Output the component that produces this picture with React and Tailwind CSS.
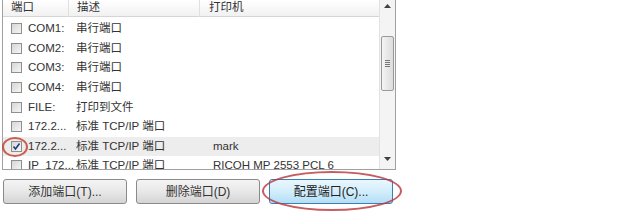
import React from "react";

const rows = [
	{ port: "COM1:", desc: "串行端口", printer: "" },
	{ port: "COM2:", desc: "串行端口", printer: "" },
	{ port: "COM3:", desc: "串行端口", printer: "" },
	{ port: "COM4:", desc: "串行端口", printer: "" },
	{ port: "FILE:", desc: "打印到文件", printer: "" },
	{ port: "172.2...", desc: "标准 TCP/IP 端口", printer: "" },
	{ port: "172.2...", desc: "标准 TCP/IP 端口", printer: "mark", checked: true },
	{ port: "IP_172...", desc: "标准 TCP/IP 端口", printer: "RICOH MP 2553 PCL 6" },
];

function CheckBox({ checked }) {
	return (
		<span className="w-[11px] h-[11px] shrink-0 border border-[#8f8f8f] bg-gradient-to-br from-[#d6d6d6] to-[#f6f6f6] flex items-center justify-center">
			{checked && (
				<svg width="9" height="9" viewBox="0 0 9 9">
					<path d="M1.5 4.5 L3.5 7 L7.5 1.5" fill="none" stroke="#1d3f78" strokeWidth="1.6" />
				</svg>
			)}
		</span>
	);
}

function ScrollBar() {
	return (
		<div className="w-[16px] h-full border-l border-[#e2e2e2] bg-[#f4f4f4] flex flex-col items-center">
			<div className="h-[12px] flex items-center justify-center">
				<svg width="7" height="4" viewBox="0 0 7 4">
					<path d="M0 4 L3.5 0 L7 4 Z" fill="#404040" />
				</svg>
			</div>
			<div className="h-[24px]" />
			<div className="w-[13px] h-[55px] rounded-[2px] border border-[#9a9a9a] bg-gradient-to-r from-[#f4f4f4] to-[#dcdcdc] flex flex-col items-center justify-center gap-[1px]">
				<span className="w-[5px] h-px bg-[#777]" />
				<span className="w-[5px] h-px bg-[#777]" />
				<span className="w-[5px] h-px bg-[#777]" />
				<span className="w-[5px] h-px bg-[#777]" />
			</div>
			<div className="flex-1" />
			<div className="h-[14px] flex items-start justify-center pt-[2px]">
				<svg width="7" height="4" viewBox="0 0 7 4">
					<path d="M0 0 L3.5 4 L7 0 Z" fill="#404040" />
				</svg>
			</div>
		</div>
	);
}

function Button({ children, hot }) {
	return (
		<button
			className={
				hot
					? "w-[124px] h-[25px] rounded-[3px] border border-[#3c7fb1] bg-gradient-to-b from-[#eaf6fd] via-[#d3eefc] to-[#b3def6] text-[#222] text-[12px]"
					: "w-[124px] h-[25px] rounded-[3px] border border-[#8a8a8a] bg-gradient-to-b from-[#f4f4f4] via-[#e8e8e8] to-[#d4d4d4] text-[#333] text-[12px]"
			}
		>
			{children}
		</button>
	);
}

export default function App() {
	return (
		<div
			className="relative w-[620px] h-[212px] overflow-hidden bg-white text-[#333]"
			style={{ fontFamily: '"Liberation Sans", "Noto Sans CJK SC", sans-serif' }}
		>
			<div className="ml-[2px] w-[394px] h-[170px] border-l border-r border-b border-[#a0a0a0] flex overflow-hidden">
				<div className="flex-1 flex flex-col overflow-hidden">
					<div className="h-[17px] shrink-0 flex items-center border-b border-[#d5d5d5] bg-gradient-to-b from-white to-[#f1f1f1] text-[11.5px]">
						<span className="w-[66px] pl-[8px] border-r border-[#e0e0e0]">端口</span>
						<span className="w-[131px] pl-[8px] border-r border-[#e0e0e0]">描述</span>
						<span className="flex-1 pl-[9px]">打印机</span>
					</div>
					<div className="pt-[2px] flex flex-col">
						{rows.map((r, i) => (
							<div
								key={i}
								className={
									"h-[19.6px] shrink-0 flex items-center text-[11.5px] " +
									(r.checked ? "bg-[#ededed]" : "")
								}
							>
								<span className="w-[8px]" />
								<CheckBox checked={r.checked} />
								<span className="w-[50px] pl-[6px] whitespace-nowrap">{r.port}</span>
								<span className="w-[131px] pl-[4px] whitespace-nowrap">{r.desc}</span>
								<span className="flex-1 pl-[10px] whitespace-nowrap">{r.printer}</span>
							</div>
						))}
					</div>
				</div>
				<ScrollBar />
			</div>

			<div className="mt-[9px] ml-[3px] flex gap-[9px]">
				<Button>添加端口(T)...</Button>
				<Button>删除端口(D)</Button>
				<Button hot>配置端口(C)...</Button>
			</div>

			{/* red annotation marks */}
			<div className="absolute left-[2px] top-[137px] w-[26px] h-[20px] rounded-[50%] border-2 border-[#c0392b]/80" />
			<div className="absolute left-[262px] top-[171px] w-[140px] h-[40px] rounded-[50%] border-2 border-[#b8343a]/80" />
		</div>
	);
}
